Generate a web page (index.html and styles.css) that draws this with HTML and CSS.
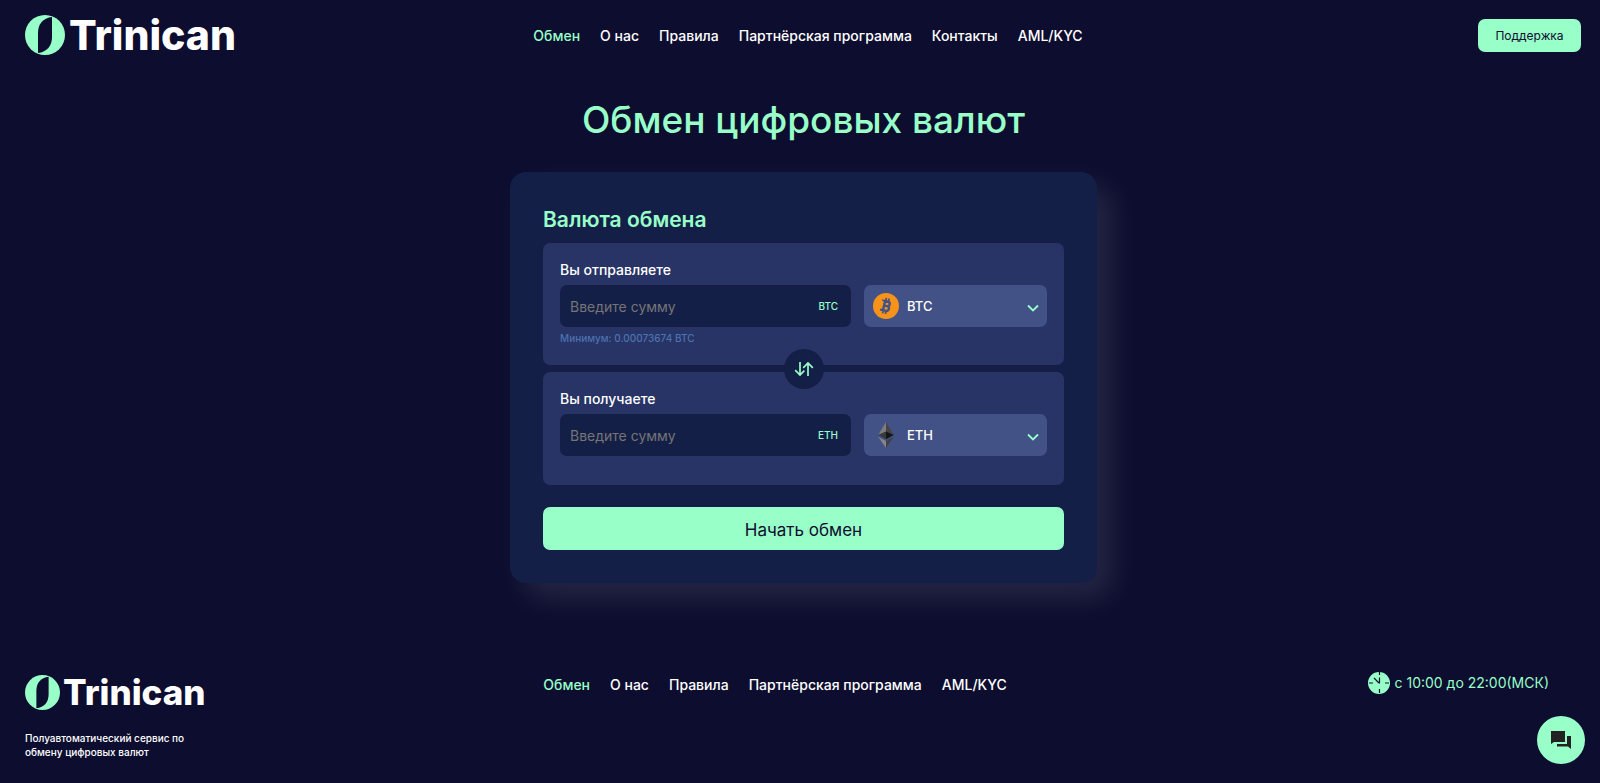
FILE: index.html
```html
<!DOCTYPE html>
<html lang="ru">
<head>
  <meta charset="UTF-8">
  <meta name="viewport" content="width=device-width, initial-scale=1.0">
  <title>Trinican</title>
  <link rel="stylesheet" href="styles.css">
</head>
<body>

  <header class="header">
    <a href="#" class="logo">
      <svg class="logo-icon" viewBox="0 0 40 40" aria-hidden="true">
        <circle cx="20" cy="20" r="20" fill="#98ffc8"/>
        <path d="M27 2 V22 C27 31 22 37 13 38 V18 C13 9 18 3 27 2 Z" fill="#0d0d2f"/>
      </svg>
      <span>Trinican</span>
    </a>
    <nav class="nav header-nav">
      <a href="#" class="active">Обмен</a>
      <a href="#">О нас</a>
      <a href="#">Правила</a>
      <a href="#">Партнёрская программа</a>
      <a href="#">Контакты</a>
      <a href="#">AML/KYC</a>
    </nav>
    <button type="button" class="support-btn">Поддержка</button>
  </header>

  <main class="main">
    <h1>Обмен цифровых валют</h1>

    <form class="card">
      <h2>Валюта обмена</h2>

      <div class="panel">
        <label for="send-amount">Вы отправляете</label>
        <div class="row">
          <div class="amount">
            <input id="send-amount" type="text" placeholder="Введите сумму">
            <span class="unit">BTC</span>
          </div>
          <div class="currency">
            <svg class="coin" viewBox="0 0 26 26" aria-hidden="true">
              <circle cx="13" cy="13" r="13" fill="#f7931a"/>
              <g transform="rotate(14 13 13)" fill="none" stroke="#435286">
                <path d="M11 7.5 V18.5 M11 8.4 H14 A2.2 2.2 0 0 1 14 12.8 H11 M14 12.8 H14.5 A2.5 2.5 0 0 1 14.5 17.7 H11" stroke-width="2.4"/>
                <path d="M8 8.2 H11 M8 17.8 H11" stroke-width="2"/>
                <path d="M11.5 5 V8 M14.3 5 V8 M11.5 18 V21 M14.3 18 V21" stroke-width="1.7"/>
              </g>
            </svg>
            <select aria-label="Валюта отправления">
              <option>BTC</option>
              <option>ETH</option>
            </select>
            <svg class="chevron" viewBox="0 0 12 8" aria-hidden="true"><path d="M1 1.5 L6 6.5 L11 1.5" fill="none" stroke="#98ffc8" stroke-width="1.8"/></svg>
          </div>
        </div>
        <p class="hint">Минимум: 0.00073674 BTC</p>
      </div>

      <div class="divider">
        <button type="button" class="swap-btn" aria-label="Поменять валюты">
          <svg viewBox="0 0 20 16" aria-hidden="true"><path d="M6 1 V14 M1.2 9.2 L6 14 L10.3 9.7 M14 15 V2 M9.2 6.8 L14 2 L18.8 6.8" fill="none" stroke="#98ffc8" stroke-width="1.7"/></svg>
        </button>
      </div>

      <div class="panel">
        <label for="get-amount">Вы получаете</label>
        <div class="row">
          <div class="amount">
            <input id="get-amount" type="text" placeholder="Введите сумму">
            <span class="unit">ETH</span>
          </div>
          <div class="currency">
            <svg class="coin" viewBox="0 0 26 26" aria-hidden="true">
              <path d="M13 0 L5.2 13 L13 9.5 Z" fill="#7d7d7f"/>
              <path d="M13 0 L20.8 13 L13 9.5 Z" fill="#454547"/>
              <path d="M5.2 13 L13 9.5 V17.2 Z" fill="#39393b"/>
              <path d="M20.8 13 L13 9.5 V17.2 Z" fill="#151517"/>
              <path d="M5.2 14.8 L13 19 V26 Z" fill="#858587"/>
              <path d="M20.8 14.8 L13 19 V26 Z" fill="#414143"/>
            </svg>
            <select aria-label="Валюта получения">
              <option>ETH</option>
              <option>BTC</option>
            </select>
            <svg class="chevron" viewBox="0 0 12 8" aria-hidden="true"><path d="M1 1.5 L6 6.5 L11 1.5" fill="none" stroke="#98ffc8" stroke-width="1.8"/></svg>
          </div>
        </div>
      </div>

      <button type="submit" class="submit-btn">Начать обмен</button>
    </form>
  </main>

  <footer class="footer">
    <div class="footer-about">
      <a href="#" class="logo logo-small">
        <svg class="logo-icon" viewBox="0 0 40 40" aria-hidden="true">
          <circle cx="20" cy="20" r="20" fill="#98ffc8"/>
          <path d="M27 2 V22 C27 31 22 37 13 38 V18 C13 9 18 3 27 2 Z" fill="#0d0d2f"/>
        </svg>
        <span>Trinican</span>
      </a>
      <p>Полуавтоматический сервис по обмену цифровых валют</p>
    </div>
    <nav class="nav footer-nav">
      <a href="#" class="active">Обмен</a>
      <a href="#">О нас</a>
      <a href="#">Правила</a>
      <a href="#">Партнёрская программа</a>
      <a href="#">AML/KYC</a>
    </nav>
    <div class="hours">
      <svg viewBox="0 0 22 22" aria-hidden="true">
        <circle cx="11" cy="11" r="11" fill="#98ffc8"/>
        <path d="M11.5 0 V3 M11.5 17 V21 M1 11 H5 M17 11 H21 M6 6 L11 11 M11.5 5.5 V11.5" fill="none" stroke="#0d0d2f" stroke-width="1.2"/>
      </svg>
      <span>с 10:00 до 22:00(МСК)</span>
    </div>
  </footer>

  <button type="button" class="chat-btn" aria-label="Чат">
    <svg viewBox="0 0 20 18" aria-hidden="true">
      <path d="M0 0 H14 V11 H3 L0 13 Z M16 5 H20 V18 L17 15.5 H6 V13 H16 Z" fill="#222"/>
    </svg>
  </button>

</body>
</html>
```

FILE: styles.css
```css
* { box-sizing: border-box; }
body { margin: 0; min-height: 100vh; display: flex; flex-direction: column; background: #0d0d2f; color: #fff; font-family: Inter, "Noto Sans", sans-serif; font-size: 14px; }
h1, h2, p { margin: 0; font-weight: 500; }
a { color: inherit; text-decoration: none; }
button, input, select { font-family: inherit; border: none; }
button { cursor: pointer; background: #98ffc8; color: #0d0d2f; }

.logo { display: flex; align-items: center; gap: 4px; font-size: 41px; line-height: 40px; font-weight: 800; }
.logo-icon { width: 40px; height: 40px; }
.logo-small { gap: 3px; font-size: 35px; line-height: 35px; }
.logo-small .logo-icon { width: 35px; height: 35px; }

.nav { display: flex; gap: 20px; font-size: 14px; line-height: 20px; font-weight: 500; white-space: nowrap; }
.nav .active { color: #98ffc8; }

.header { display: grid; grid-template-columns: 1fr auto 1fr; align-items: center; padding: 15px 19px 15px 25px; }
.header-nav { padding: 2px 0 0 10px; }
.support-btn { justify-self: end; width: 103px; height: 33px; border-radius: 7px; font-size: 12px; }

.main { display: flex; flex-direction: column; align-items: center; padding: 24px 0 0 7px; }
h1 { color: #98ffc8; font-size: 37px; line-height: 52px; }

.card { width: 100%; max-width: 587px; margin-top: 26px; padding: 33px; border-radius: 16px; background: #141f48; box-shadow: 15px 15px 30px rgba(255, 255, 255, 0.1); }
h2 { color: #98ffc8; font-size: 21px; line-height: 30px; margin-bottom: 8px; font-weight: 600; }
.panel { padding: 17px 17px 29px; border-radius: 7px; background: #273465; }
.panel label { display: block; font-size: 14px; line-height: 20px; font-weight: 500; margin-bottom: 5px; }
.row { display: grid; grid-template-columns: 291fr 183fr; gap: 13px; }
.amount, .currency { position: relative; }
.amount input { width: 100%; height: 42px; padding: 0 60px 0 10px; border-radius: 7px; background: #141f48; color: #fff; font-size: 14px; }
.amount input::placeholder { color: #757575; }
.unit { position: absolute; right: 13px; top: 13px; color: #98ffc8; font-size: 10px; line-height: 16px; font-weight: 500; }
.currency select { width: 100%; height: 42px; padding: 0 30px 0 43px; border-radius: 7px; background: #435286; color: #fff; font-size: 13px; font-weight: 500; appearance: none; }
.coin { position: absolute; left: 9px; top: 8px; width: 26px; height: 26px; pointer-events: none; }
.chevron { position: absolute; right: 8px; top: 19px; width: 12px; height: 8px; pointer-events: none; }
.hint { color: #4c72b0; font-size: 10px; line-height: 14px; margin-top: 4px; margin-bottom: -9px; }

.divider { position: relative; height: 7px; }
.swap-btn { position: absolute; left: 50%; top: 50%; transform: translate(-50%, -50%); display: flex; align-items: center; justify-content: center; width: 40px; height: 40px; padding: 0; border-radius: 50%; background: #141f48; }
.swap-btn svg { width: 20px; height: 16px; }
.submit-btn { width: 100%; height: 43px; margin-top: 22px; padding-top: 3px; border-radius: 7px; font-size: 17px; }

.footer { display: grid; grid-template-columns: 1fr auto 1fr; align-items: start; margin-top: auto; padding: 0 51px 24px 25px; }
.footer-about p { max-width: 180px; margin-top: 21px; font-size: 10px; line-height: 14px; }
.footer-nav { margin-right: 24px; }
.hours { display: flex; align-items: center; justify-content: flex-end; gap: 5px; margin-top: -3px; color: #98ffc8; font-size: 14px; line-height: 20px; }
.hours svg { width: 22px; height: 22px; }

.chat-btn { position: fixed; right: 15px; bottom: 19px; display: flex; align-items: center; justify-content: center; width: 48px; height: 48px; padding: 0; border-radius: 50%; }
.chat-btn svg { width: 20px; height: 18px; }
```
